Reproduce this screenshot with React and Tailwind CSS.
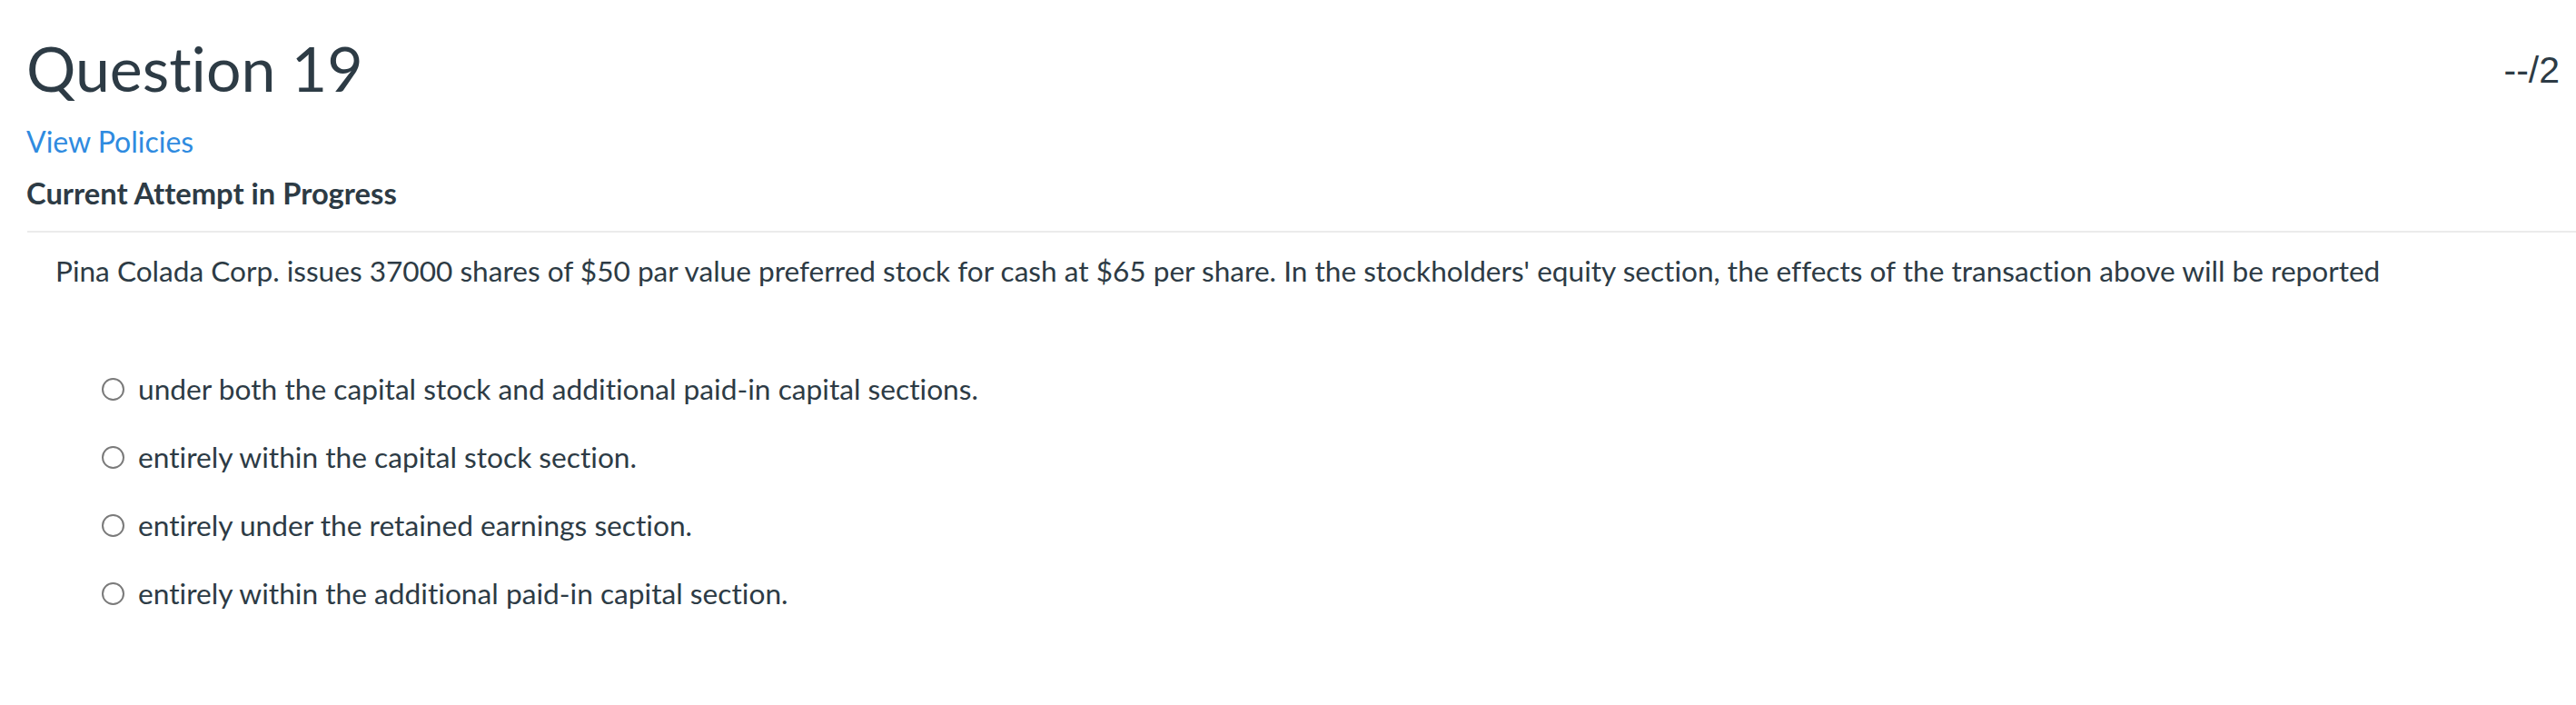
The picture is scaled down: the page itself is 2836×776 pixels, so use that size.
import React from "react";

const options = [
  "under both the capital stock and additional paid-in capital sections.",
  "entirely within the capital stock section.",
  "entirely under the retained earnings section.",
  "entirely within the additional paid-in capital section.",
];

export default function App() {
  return (
    <div className="w-[2836px] h-[776px] bg-white text-[#2d3b45] font-['Lato','Noto_Sans',sans-serif] [font-variant-ligatures:none] overflow-hidden">
      <div className="pl-[29px] pr-[18px]">
        <div className="flex items-start justify-between pt-[36px]">
          <h1 className="text-[68px] leading-[78px] font-normal">Question 19</h1>
          <div className="font-['Liberation_Sans',Arial,sans-serif] text-[41px] leading-[44px] pt-[19px]">--/2</div>
        </div>
        <a className="block mt-[23px] text-[32px] leading-[38px] text-[#2f8be0]">View Policies</a>
        <div className="mt-[19px] text-[32.7px] leading-[38px] font-bold">Current Attempt in Progress</div>
      </div>
      <div className="ml-[30px] mt-[22px] h-[2px] bg-[#ebebeb]"></div>
      <div className="pl-[61px] pt-[23px] text-[31.6px] leading-[38px]">
        Pina Colada Corp. issues 37000 shares of $50 par value preferred stock for cash at $65 per share. In the stockholders' equity section, the effects of the transaction above will be reported
      </div>
      <div className="pl-[112px] pt-[92px] flex flex-col gap-[37px]">
        {options.map((o) => (
          <label key={o} className="flex items-center gap-[15px] text-[31.7px] leading-[38px]">
            <span className="w-[25px] h-[25px] rounded-full border-2 border-[#7a7a7a] bg-white shrink-0"></span>
            <span>{o}</span>
          </label>
        ))}
      </div>
    </div>
  );
}
